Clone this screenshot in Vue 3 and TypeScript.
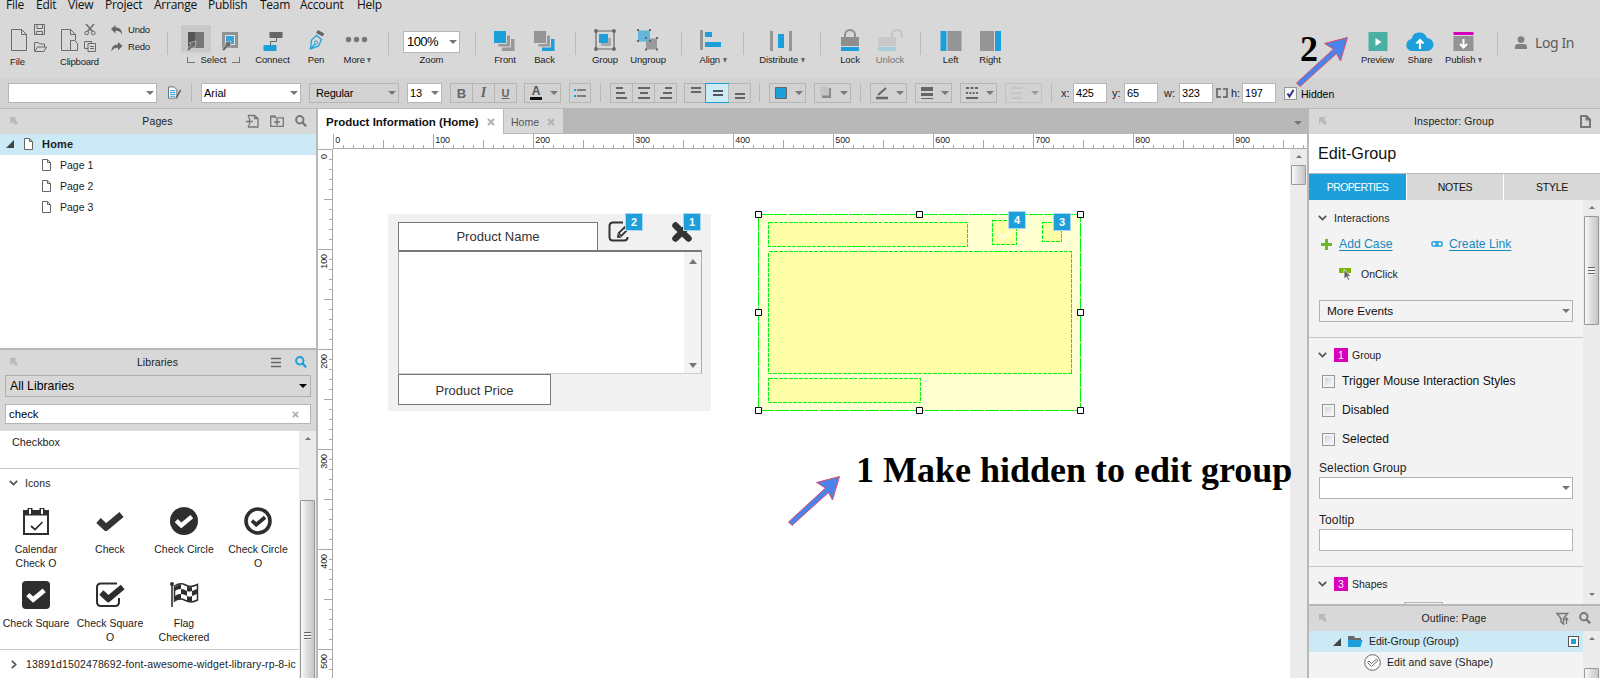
<script setup lang="ts">
interface Tick {
  at: number
  level: number
  label: string
}

const makeTicks = (count: number): Tick[] =>
  Array.from({ length: count }, (_, i) => ({
    at: i * 10,
    level: i % 10 === 0 ? 2 : i % 5 === 0 ? 1 : 0,
    label: i % 10 === 0 ? String(i * 10) : '',
  }))

const columns = makeTicks(98)
const rows = makeTicks(53)

const menu = [
  { name: 'File', w: 30 },
  { name: 'Edit', w: 32 },
  { name: 'View', w: 37 },
  { name: 'Project', w: 49 },
  { name: 'Arrange', w: 54 },
  { name: 'Publish', w: 52 },
  { name: 'Team', w: 40 },
  { name: 'Account', w: 57 },
  { name: 'Help', w: 40 },
]
const pages = ['Page 1', 'Page 2', 'Page 3']
const flags = ['Trigger Mouse Interaction Styles', 'Disabled', 'Selected']
const glyphs = [
  { id: 'cal', text: 'Calendar Check O' },
  { id: 'tick', text: 'Check' },
  { id: 'circle', text: 'Check Circle' },
  { id: 'circleo', text: 'Check Circle O' },
  { id: 'square', text: 'Check Square' },
  { id: 'squareo', text: 'Check Square O' },
  { id: 'flag', text: 'Flag Checkered' },
]
const handles = [
  [0, 0], [161, 0], [322, 0],
  [0, 98], [322, 98],
  [0, 196], [161, 196], [322, 196],
]
</script>

<template>
  <div class="app">
    <svg class="defs" width="0" height="0">
      <symbol id="popout" viewBox="0 0 8 8"><path d="M0 0h7L5 2l3 4-2 2-4-3-2 2z" fill="#bababa" /></symbol>
      <symbol id="page" viewBox="0 0 9 12"><path d="M.5 .5h5l3 3v8h-8zM5.5 .5v3h3" fill="#fff" stroke="#666" /></symbol>
      <symbol id="lens" viewBox="0 0 12 12"><circle cx="4.8" cy="4.8" r="3.7" fill="none" stroke="currentColor" stroke-width="2" /><path d="M7.5 7.5l3.7 3.8" stroke="currentColor" stroke-width="2.4" /></symbol>
      <symbol id="chev" viewBox="0 0 9 6"><path d="M.8 .8l3.7 3.8L8.200 .8" fill="none" stroke="#555" stroke-width="1.700" /></symbol>
      <symbol id="cross" viewBox="0 0 8 8"><path d="M1 1l6 6M7 1L1 7" stroke="#b4b4b4" stroke-width="2.200" /></symbol>
      <symbol id="mark" viewBox="0 0 28 20"><path d="M2.500 9.500l7.500 7L25.500 3.500" fill="none" stroke="currentColor" stroke-width="6.500" /></symbol>
    </svg>

    <nav class="menu">
      <span v-for="m in menu" :key="m.name" :style="{ width: m.w + 'px' }">{{ m.name }}</span>
    </nav>

    <header class="tools">
      <div class="tool file low">
        <svg viewBox="0 22 50 34" width="50" height="34">
          <g fill="none" stroke="#6a6a6a">
            <path d="M11.500 29.500h10l5 5v16h-15zM21.500 29.500v5h5" />
            <path d="M34.500 24.500h10v10h-10zM37 24.500v4h5.500v-4M36.500 34.500v-3h6v3" />
            <path d="M34.500 51v-8.500h4l1 1.500h5v3M34.500 51.500l3-4.500h9l-2.500 4.500z" />
          </g>
        </svg>
        <span>File</span>
      </div>
      <div class="tool clip low">
        <svg viewBox="50 22 58 34" width="58" height="34">
          <g fill="none" stroke="#6a6a6a">
            <path d="M70 50.500h-8.500v-21h9l5 5v6M70.500 29.500v5h5" />
            <path d="M70.500 40.500h4l3 3v7h-7z" />
            <path d="M88 51.500h7.500v-8h-7.500zM88 48.500h-3.500v-7h7v2M90 46.500h4M90 48.500h4" />
            <path d="M86 24l6.500 7.500M94 24l-6.500 7.500" stroke-width="1.500" />
            <circle cx="86.700" cy="33" r="1.800" /><circle cx="93.300" cy="33" r="1.800" />
          </g>
        </svg>
        <span>Clipboard</span>
      </div>
      <div class="history">
        <div><svg width="12" height="10" viewBox="0 0 12 10"><path d="M0 4L4.500 0v2.500C9 2.500 11 5 11 9.500 9 6.500 8 5.800 4.500 5.800V8.500z" fill="#666" /></svg>Undo</div>
        <div><svg width="12" height="10" viewBox="0 0 12 10"><path d="M11.500 4L7 0v2.500C2.500 2.500 .5 5 .5 9.500 2.500 6.500 3.500 5.800 7 5.800V8.500z" fill="#666" /></svg>Redo</div>
      </div>
      <i class="sep w18" />
      <div class="tool select">
        <svg viewBox="176 22 70 31" width="70" height="31">
          <path d="M181 25h30v27.500h-30z" fill="#c9c9c9" />
          <path d="M188 32h7v16h-7z" fill="#555" /><path d="M195 32h9v16h-9z" fill="#777" />
          <path d="M223.500 33.500h13v13h-13z" fill="#d8e8ef" stroke="#929292" stroke-width="3" />
          <path d="M226 36h8v8h-8z" fill="#35a3d8" />
          <g fill="#666" stroke="#ccc" stroke-width=".7">
            <path d="M196 41l-7 2 2 1.500-4 5 2 1.500 4-4.500 2 1.500z" />
            <path d="M231 41l-7 2 2 1.500-4 5 2 1.500 4-4.500 2 1.500z" />
          </g>
        </svg>
        <div class="bracket"><i class="l" /><span>Select</span><i class="r" /></div>
      </div>
      <div class="tool w53">
        <svg viewBox="-15 28 30 26"><path d="M-3.500 32h13v6h-13z" fill="#666" /><path d="M3.500 38v3.500h-6V45" fill="none" stroke="#666" /><path d="M-9.500 45h13v6h-13z" fill="#1c9fda" /></svg>
        <span>Connect</span>
      </div>
      <div class="tool w34">
        <svg viewBox="-15 28 30 26">
          <path d="M-5.500 49l1-9 5-4.500 5 4-3 6.500zM-5.500 49l4.500-5" fill="none" stroke="#2ba5dc" stroke-width="1.400" /><circle cx="0" cy="42.500" r="1.600" fill="none" stroke="#2ba5dc" />
          <path d="M1 31.500l6.500 3.500" stroke="#666" stroke-width="3.500" />
        </svg>
        <span>Pen</span>
      </div>
      <div class="tool w49">
        <svg viewBox="-15 28 30 26"><g fill="#777"><circle cx="-9.500" cy="39.500" r="2.700" /><circle cx="-1.500" cy="39.500" r="2.700" /><circle cx="6.500" cy="39.500" r="2.700" /></g></svg>
        <span>More <b class="tri" /></span>
      </div>
      <i class="sep w13" />
      <div class="tool zoom">
        <div class="zoombox">100%<b class="caret" /></div>
        <span>Zoom</span>
      </div>
      <i class="sep w15" />
      <div class="tool w44">
        <svg viewBox="-15 28 30 26"><path d="M-3 39h12.500v12h-12.500z" fill="#999" /><path d="M-7 35h12.500v12h-12.500z" fill="#999" stroke="#d8d8d8" /><path d="M-11.500 30.500h13v13h-13z" fill="#1c9fda" stroke="#d8d8d8" /></svg>
        <span>Front</span>
      </div>
      <div class="tool w35">
        <svg viewBox="-15 28 30 26"><path d="M-3 39h12.500v12h-12.500z" fill="#1c9fda" /><path d="M-7 35h12.500v12h-12.500z" fill="#999" stroke="#d8d8d8" /><path d="M-11.500 30.500h13v13h-13z" fill="#959595" stroke="#d8d8d8" /></svg>
        <span>Back</span>
      </div>
      <i class="sep w27" />
      <div class="tool w32">
        <svg viewBox="-15 28 30 26">
          <path d="M-4 38h10v8h-10z" fill="#aaa" /><path d="M-6 34h9v9h-9z" fill="#1c9fda" />
          <path d="M-9 31h18v18h-18z" fill="none" stroke="#666" stroke-width="1.200" />
          <g fill="#666"><circle cx="-9" cy="31" r="1.900" /><circle cx="9" cy="31" r="1.900" /><circle cx="-9" cy="49" r="1.900" /><circle cx="9" cy="49" r="1.900" /></g>
        </svg>
        <span>Group</span>
      </div>
      <div class="tool w54">
        <svg viewBox="-15 28 30 26">
          <path d="M-2 38.500h11v11h-11z" fill="#999" /><path d="M-10 30.500h12v11h-12z" fill="#64b4dc" />
          <g fill="#666"><path d="M-11 29h2v2h-2zM1 29h2v2h-2zM-11 40h2v2h-2zM1 40h2v2h-2zM-3 37h2v2h-2zM8 37h2v2h-2zM-3 48.500h2v2h-2zM8 48.500h2v2h-2z" /></g>
        </svg>
        <span>Ungroup</span>
      </div>
      <i class="sep w13" />
      <div class="tool w50">
        <svg viewBox="-15 28 30 26"><path d="M-13 30h3v20h-3z" fill="#959595" /><path d="M-8 32h7v5h-7zM-8 42h16v5h-16z" fill="#1c9fda" /></svg>
        <span>Align <b class="tri" /></span>
      </div>
      <i class="sep w11" />
      <div class="tool w66">
        <svg viewBox="-15 28 30 26"><path d="M-12 31h3v20h-3zM7 31h3v20H7z" fill="#959595" /><path d="M-4 34h6v14h-6z" fill="#1c9fda" /></svg>
        <span>Distribute <b class="tri" /></span>
      </div>
      <i class="sep w11" />
      <div class="tool w48">
        <svg viewBox="-15 28 30 26"><path d="M-5 38v-3a5 5 0 0 1 10 0v3" fill="none" stroke="#8e8e8e" stroke-width="2" /><path d="M-9 37H9v9H-9z" fill="#8e8e8e" /><path d="M-9 47H9v4H-9z" fill="#1c9fda" /></svg>
        <span>Lock</span>
      </div>
      <div class="tool w32 off">
        <svg viewBox="-15 28 30 26"><path d="M2 38v-3a5 5 0 0 1 10 0v2" fill="none" stroke="#c3c3c3" stroke-width="2" /><path d="M-12 37H6v9h-18z" fill="#c8c8c8" /><path d="M-12 47H6v4h-18z" fill="#a9ccdb" /></svg>
        <span>Unlock</span>
      </div>
      <i class="sep w29" />
      <div class="tool w31">
        <svg viewBox="-15 28 30 26"><path d="M-10.500 31h6v20h-6z" fill="#1c9fda" /><path d="M-3.500 31h14v20h-14z" fill="#959595" /></svg>
        <span>Left</span>
      </div>
      <div class="tool w48">
        <svg viewBox="-15 28 30 26"><path d="M5 31h6v20H5z" fill="#1c9fda" /><path d="M-10 31H4v20h-14z" fill="#959595" /></svg>
        <span>Right</span>
      </div>
      <div class="gap" />
      <div class="tool w45">
        <svg viewBox="-15 28 30 26"><path d="M-9.500 32h19v19h-19z" fill="#4ab0a4" /><path d="M-2.500 38v8l6-4z" fill="#fff" /></svg>
        <span>Preview</span>
      </div>
      <div class="tool w40">
        <svg viewBox="-15 28 30 26"><path d="M-7 51a6 6 0 0 1-1.500-12A8 8 0 0 1 7 38a6.500 6.500 0 0 1 0 13z" fill="#1c9fda" /><path d="M0 49v-8M-3.500 43.500L0 40l3.500 3.500" fill="none" stroke="#fff" stroke-width="2.200" /></svg>
        <span>Share</span>
      </div>
      <div class="tool w47">
        <svg viewBox="-15 28 30 26"><path d="M-10.500 32h20v3h-20z" fill="#d900bd" /><path d="M-10.500 36h20v15h-20z" fill="#939393" /><path d="M-.5 39v8M-4 44l3.500 3.500L3 44" fill="none" stroke="#fff" stroke-width="2" /></svg>
        <span>Publish <b class="tri" /></span>
      </div>
      <i class="sep w21" />
      <div class="login">
        <svg width="12" height="13" viewBox="0 0 12 13"><circle cx="6" cy="3.600" r="3.400" fill="#808080" /><path d="M0 13v-2q0-3 3-3h6q3 0 3 3v2z" fill="#808080" /></svg>
        Log In
      </div>
    </header>

    <section class="format">
      <div class="box white b149"><b class="caret" /></div>
      <svg class="ico-style" width="15" height="14" viewBox="0 0 15 14"><path d="M.5 .5h6l3 3v9h-9z" fill="#fff" stroke="#666" /><path d="M2 4.500h6M2 6.500h6M2 8.500h6M2 10.500h6" stroke="#1c9fda" /><path d="M13.500 4l-4.500 8" stroke="#666" stroke-width="1.800" /></svg>
      <i class="bar" />
      <div class="box white b100"><span>Arial</span><b class="caret" /></div>
      <div class="box b90"><span class="in">Regular</span><b class="caret" /></div>
      <div class="box white b35"><span>13</span><b class="caret" /></div>
      <div class="seg">
        <i class="bold">B</i><i class="ital">I</i><i class="und">U</i>
      </div>
      <div class="box b37"><i class="colr">A</i><b class="caret" /></div>
      <div class="box b22"><svg width="22" height="18" viewBox="0 0 22 18"><path d="M4 5h2v2H4zM4 11h2v2H4z" fill="#1c9fda" /><path d="M7 6h9M7 12h9" stroke="#666" stroke-width="1.500" /></svg></div>
      <i class="bar m9" />
      <div class="seg">
        <i><svg width="20" height="18" viewBox="0 0 20 18"><path d="M4 4h7M4 9h9M4 14h11" stroke="#666" stroke-width="2" /></svg></i>
        <i><svg width="20" height="18" viewBox="0 0 20 18"><path d="M4 4h12M6 9h8M4 14h12" stroke="#666" stroke-width="2" /></svg></i>
        <i><svg width="20" height="18" viewBox="0 0 20 18"><path d="M9 4h7M7 9h9M4 14h12" stroke="#666" stroke-width="2" /></svg></i>
      </div>
      <div class="seg">
        <i><svg width="20" height="18" viewBox="0 0 20 18"><path d="M5 4h10M5 8h10" stroke="#666" stroke-width="2" /></svg></i>
        <i class="on"><svg width="20" height="18" viewBox="0 0 20 18"><path d="M5 7h10M5 11h10" stroke="#555" stroke-width="2" /></svg></i>
        <i><svg width="20" height="18" viewBox="0 0 20 18"><path d="M5 10h10M5 14h10" stroke="#666" stroke-width="2" /></svg></i>
      </div>
      <i class="bar m9" />
      <div class="box b37"><svg width="20" height="18" viewBox="0 0 20 18"><path d="M5.500 3.500h11v11h-11z" fill="#1c9fda" stroke="#666" /></svg><b class="caret" /></div>
      <div class="box b37"><svg width="20" height="18" viewBox="0 0 20 18"><path d="M7 4h9v10H7z" fill="#8a8a8a" /><path d="M5 2.500h9v9H5z" fill="#c4c4c4" /></svg><b class="caret" /></div>
      <i class="bar m9" />
      <div class="box b37"><svg width="20" height="18" viewBox="0 0 20 18"><path d="M5 14h12" stroke="#666" stroke-width="2.500" /><path d="M7 11l8-7" stroke="#666" stroke-width="2" /></svg><b class="caret" /></div>
      <div class="box b37"><svg width="20" height="18" viewBox="0 0 20 18"><path d="M5 3h12v4H5zM5 9h12v3H5zM5 14h12v1H5z" fill="#666" /></svg><b class="caret" /></div>
      <div class="box b37"><svg width="20" height="18" viewBox="0 0 20 18"><path d="M5 4h12" stroke="#666" stroke-width="2" stroke-dasharray="3 1.500" /><path d="M5 9h12" stroke="#666" stroke-width="2" stroke-dasharray="2 1.300" /><path d="M5 14h12" stroke="#666" stroke-width="2" /></svg><b class="caret" /></div>
      <div class="box b37 dim"><svg width="20" height="18" viewBox="0 0 20 18"><path d="M5 4h11M5 9h11M5 14h11" stroke="#aaa" /></svg><b class="caret" /></div>
      <i class="bar m9" />
      <label class="dim-l">x:</label><div class="box white b34 n">425</div>
      <label class="dim-l two">y:</label><div class="box white b34 n">65</div>
      <label class="dim-l three">w:</label><div class="box white b34 n">323</div>
      <svg class="ico-link" width="12" height="10" viewBox="0 0 12 10"><path d="M5 1H1v8h4M7 1h4v8H7" fill="none" stroke="#777" stroke-width="2" /></svg>
      <label class="dim-l four">h:</label><div class="box white b34 n">197</div>
      <div class="chk hid"><svg width="11" height="11" viewBox="0 0 11 11"><path d="M2.500 5.500l2 3L8.500 2" fill="none" stroke="#2d2f86" stroke-width="2" /></svg></div>
      <span class="hidden-t">Hidden</span>
    </section>

    <main class="body">
      <aside class="left">
        <div class="head">
          <svg class="pop" width="8" height="8"><use href="#popout" /></svg>
          <span class="ttl">Pages</span>
          <span class="acts">
            <svg width="13" height="14" viewBox="0 0 13 14"><path d="M2.500 4V1.500h6l3.500 3V13H2.500v-2M8.500 1.500v3h3.500M0 7.500h7M3.500 4v7" fill="none" stroke="#777" stroke-width="1.300" /></svg>
            <svg width="14" height="12" viewBox="0 0 14 12"><path d="M.7 11.300v-10h4l1 1.500h7.600v8.500z" fill="none" stroke="#777" stroke-width="1.300" /><path d="M.5 .5h5v2h-5z" fill="#777" /><path d="M7 4v6M4 7h6" stroke="#777" stroke-width="1.600" /></svg>
            <svg class="grey" width="12" height="12"><use href="#lens" /></svg>
          </span>
        </div>
        <div class="tree">
          <div class="row on"><svg class="exp" width="8" height="8" viewBox="0 0 8 8"><path d="M8 0v8H0z" fill="#444" /></svg><svg width="9" height="12"><use href="#page" /></svg><b>Home</b></div>
          <div v-for="p in pages" :key="p" class="row sub"><svg width="9" height="12"><use href="#page" /></svg><span>{{ p }}</span></div>
        </div>
        <div class="libs">
          <div class="head">
            <svg class="pop" width="8" height="8"><use href="#popout" /></svg>
            <span class="ttl">Libraries</span>
            <span class="acts">
              <svg width="10" height="11" viewBox="0 0 10 11"><path d="M0 1.500h10M0 5.500h10M0 9.500h10" stroke="#666" stroke-width="1.600" /></svg>
              <svg class="blue" width="12" height="12"><use href="#lens" /></svg>
            </span>
          </div>
          <div class="libsel">All Libraries<b class="caret k" /></div>
          <div class="libq">check<svg width="7" height="7"><use href="#cross" /></svg></div>
          <div class="lib-body">
            <div class="lib-list">
              <div class="cb">Checkbox</div>
              <div class="cat"><svg width="9" height="6"><use href="#chev" /></svg>Icons</div>
              <div class="grid">
                <div v-for="g in glyphs" :key="g.id" class="cell">
                  <svg width="30" height="30" viewBox="-15 -15 30 30">
                    <g v-if="g.id === 'cal'" fill="none" stroke="#2e2e2e"><path d="M-12-10h24v23h-24z" stroke-width="2" /><path d="M-12-8h24" stroke-width="5" /><path d="M-6-13v6M6-13v6" stroke-width="5" /><path d="M-6-12v5M6-12v5" stroke="#fff" stroke-width="2" /><path d="M-5 5l4 3.500L6.500 1" stroke-width="1.700" /></g>
                    <use v-else-if="g.id === 'tick'" href="#mark" x="-14" y="-10" width="28" height="20" color="#333" />
                    <g v-else-if="g.id === 'circle'"><circle r="14" fill="#2e2e2e" /><use href="#mark" x="-9.500" y="-7" width="19" height="14" color="#fff" /></g>
                    <g v-else-if="g.id === 'circleo'"><circle r="12" fill="none" stroke="#2e2e2e" stroke-width="3.600" /><use href="#mark" x="-7.500" y="-6" width="16" height="12" color="#2e2e2e" /></g>
                    <g v-else-if="g.id === 'square'"><rect x="-14" y="-14" width="28" height="28" rx="4" fill="#2e2e2e" /><use href="#mark" x="-10" y="-8" width="20" height="16" color="#fff" /></g>
                    <g v-else-if="g.id === 'squareo'"><path d="M7-11.500H-9q-4 0-4 4V7q0 4 4 4H5q4 0 4-4V3" fill="none" stroke="#2e2e2e" stroke-width="2" /><use href="#mark" x="-11" y="-11.500" width="26" height="19" color="#2e2e2e" /></g>
                    <g v-else>
                      <path d="M-12-12v24" stroke="#2e2e2e" stroke-width="1.600" /><circle cx="-12" cy="-11" r="2" fill="#2e2e2e" />
                      <path d="M-9.500-9q6-4 11-1t12-.5V5q-6 3.500-12 .5T-9.500 6z" fill="#fff" stroke="#2e2e2e" stroke-width="1.500" />
                      <path d="M-9-8q3-3 6-2.500V-6q-3-.5-6 2zM3-9q3 2 5 1v4q-3 1-5 0zM-3-6q3 0 6 2V1q-3-2-6-2zM8-4l5-2v5L8 1zM-9 1q3-2.500 6-2v5q-3-.5-6 1.500zM3 1q3 1.500 5 0v5q-3 1-5 0z" fill="#2e2e2e" />
                    </g>
                  </svg>
                  <span>{{ g.text }}</span>
                </div>
              </div>
              <div class="cat last"><svg width="6" height="9" viewBox="0 0 6 9"><path d="M.8 .8l3.900 3.700L.8 8.200" fill="none" stroke="#555" stroke-width="1.700" /></svg>13891d1502478692-font-awesome-widget-library-rp-8-ic</div>
            </div>
            <div class="sb sbl"><i class="up" /><div class="thumb"><i class="grip" /></div></div>
          </div>
        </div>
      </aside>

      <section class="center">
        <div class="tabs">
          <div class="tab on">Product Information (Home)<svg width="8" height="8"><use href="#cross" /></svg></div>
          <div class="tab">Home<svg width="8" height="8"><use href="#cross" /></svg></div>
          <b class="caret" />
        </div>
        <svg class="hr" width="989" height="15" viewBox="318 134 989 15">
          <path d="M333 148.500H1307" stroke="#aaa" />
          <g v-for="t in columns" :key="t.at">
            <path :d="`M${333.5 + t.at} ${[145, 140, 134][t.level]}V149`" stroke="#a8a8a8" />
            <text v-if="t.label" :x="335.300 + t.at" y="143">{{ t.label }}</text>
          </g>
        </svg>
        <div class="work">
          <svg class="vr" width="15" height="529" viewBox="318 149 15 529">
            <path d="M332.500 149V678" stroke="#aaa" />
            <g v-for="t in rows" :key="t.at">
              <path :d="`M${[329, 324, 318][t.level]} ${149.5 + t.at}H333`" stroke="#a8a8a8" />
              <text v-if="t.label" text-anchor="end" :transform="`translate(327 ${154 + t.at}) rotate(-90)`">{{ t.label }}</text>
            </g>
          </svg>
          <div class="canvas">
            <div class="shape card" />
            <div class="shape name">Product Name</div>
            <div class="shape area"><div><i class="up" /><i class="down" /></div></div>
            <div class="shape price">Product Price</div>
            <svg class="shape ic-edit" width="22" height="22" viewBox="0 0 22 22"><path d="M15 1.500H5Q1.500 1.500 1.500 5v11Q1.500 19.500 5 19.500h11q3.500 0 3.500-3.500" fill="none" stroke="#333" stroke-width="2" /><path d="M18.500 7l-7 7" stroke="#333" stroke-width="5.500" /><path d="M17 8.500l-4.500 4.500" stroke="#f1f1f1" stroke-width="1.800" /><path d="M9 17l.5-4.500 4 4z" fill="#333" /></svg>
            <svg class="shape ic-x" width="20" height="20" viewBox="0 0 20 20"><path d="M3.500 3.500l13 13M16.500 3.500l-13 13" stroke="#333" stroke-width="6.500" stroke-linecap="round" /></svg>
            <i class="shape note n2">2</i><i class="shape note n1">1</i>

            <svg class="shape group" width="330" height="204" viewBox="-4 -4 330 204">
              <path d="M.5 .5h322v196H.5z" fill="#ffffd1" stroke="#00f510" stroke-dasharray="14 1" shape-rendering="crispEdges" />
              <g fill="#ffffa8" stroke="#00f510" stroke-dasharray="4 1" shape-rendering="crispEdges">
                <path d="M10.500 8.500h199v24h-199zM10.500 37.500h303v122h-303zM10.500 164.500h152v24h-152zM234.500 6.500h24v24h-24zM284.500 8.500h19v19h-19z" />
              </g>
              <path d="M239.500 19l5.500 5.500 8-8" fill="none" stroke="#ffffd8" stroke-width="3" />
              <path v-for="h in handles" :key="h.join()" :d="`M${h[0] - 2.5} ${h[1] - 2.5}h6v6h-6z`" fill="#fff" stroke="#000" />
            </svg>
            <i class="shape note n4">4</i><i class="shape note n3">3</i>
          </div>
          <div class="sb sbc"><i class="up" /><div class="thumb" /></div>
        </div>
      </section>

      <aside class="right">
        <div class="head">
          <svg class="pop" width="8" height="8"><use href="#popout" /></svg>
          <span class="ttl">Inspector: Group</span>
          <span class="acts"><svg width="11" height="13" viewBox="0 0 11 13"><path d="M1 1h5.500L10 4.500V12H1zM6.500 1v3.500H10" fill="none" stroke="#777" stroke-width="2" /></svg></span>
        </div>
        <div class="gname">Edit-Group</div>
        <div class="ptabs"><span class="on">PROPERTIES</span><span>NOTES</span><span>STYLE</span></div>
        <div class="props">
          <div class="plist">
            <div class="ph p1"><svg width="9" height="6"><use href="#chev" /></svg><span>Interactions</span></div>
            <div class="links">
              <svg width="11" height="11" viewBox="0 0 11 11"><path d="M0 5.500h11M5.500 0v11" stroke="#6db82a" stroke-width="3" /></svg><a class="a1">Add Case</a>
              <svg width="12" height="6" viewBox="0 0 12 6"><rect x=".8" y=".8" width="6.200" height="4.200" rx="2.100" fill="none" stroke="#2ba5dc" stroke-width="1.500" /><rect x="5" y=".8" width="6.200" height="4.200" rx="2.100" fill="none" stroke="#2ba5dc" stroke-width="1.500" /></svg><a>Create Link</a>
            </div>
            <div class="click"><svg width="13" height="13" viewBox="0 0 13 13"><path d="M0 0h12v5H0z" fill="#76b900" /><path d="M5 1.500l7 6.500-3 .3 1.600 3.400-1.600.8-1.500-3.500L5 11z" fill="#666" stroke="#f3f3f3" stroke-width=".8" /></svg>OnClick</div>
            <div class="field ev">More Events<b class="caret" /></div>
            <div class="ph p2"><svg width="9" height="6"><use href="#chev" /></svg><em>1</em><span>Group</span></div>
            <div v-for="f in flags" :key="f" class="flag"><i class="chk" />{{ f }}</div>
            <div class="lbl">Selection Group</div>
            <div class="field w"><b class="caret" /></div>
            <div class="lbl t">Tooltip</div>
            <div class="field w" />
            <div class="ph p3"><svg width="9" height="6"><use href="#chev" /></svg><em>3</em><span>Shapes</span></div>
            <div class="peek" />
          </div>
          <div class="sb sbr"><i class="up" /><div class="thumb"><i class="grip" /></div><i class="down" /></div>
        </div>
        <div class="outline">
          <div class="head">
            <svg class="pop" width="8" height="8"><use href="#popout" /></svg>
            <span class="ttl">Outline: Page</span>
            <span class="acts">
              <svg width="13" height="13" viewBox="0 0 13 13"><path d="M1 1.500h10.500L7.500 6.500V12L5 10V6.500z" fill="none" stroke="#777" stroke-width="1.500" /><path d="M10.500 12V6M8.800 8l1.700-2 1.700 2" fill="none" stroke="#777" stroke-width="1.200" /></svg>
              <svg class="grey" width="12" height="12"><use href="#lens" /></svg>
            </span>
          </div>
          <div class="obody">
            <div class="olist">
              <div class="orow on"><svg class="exp" width="8" height="8" viewBox="0 0 8 8"><path d="M8 0v8H0z" fill="#444" /></svg><svg width="15" height="11" viewBox="0 0 15 11"><path d="M0 0h6l1 2h6v3H0z" fill="#666" /><path d="M0 11V3l2.500 1H14.500L12.500 11z" fill="#1c9fda" /></svg><span>Edit-Group (Group)</span><i class="vis" /></div>
              <div class="orow two"><svg width="17" height="17" viewBox="0 0 17 17"><circle cx="8.500" cy="8.500" r="7.800" fill="#fff" stroke="#666" /><path d="M3.500 8.500l1.500-1.500 2.500 2.500 5-4.500 1.500 1.500-6.500 6z" fill="none" stroke="#666" /></svg><span>Edit and save (Shape)</span></div>
            </div>
            <div class="sb sbo"><i class="up" /><div class="thumb" /></div>
          </div>
        </div>
      </aside>
    </main>

    <svg class="arrow first" width="54" height="52" viewBox="-2 -1 54 52"><path d="M50.500 .5L43.500 24l-4-7.500L3 49.500 -.5 46 36.500 12 27.500 6.500z" fill="#4b83ea" stroke="#e04e66" /></svg>
    <svg class="arrow second" width="54" height="52" viewBox="-2 -1 54 52"><path d="M50.500 .5L43.500 24l-4-7.500L3 49.500 -.5 46 36.500 12 27.500 6.500z" fill="#4b83ea" stroke="#e04e66" /></svg>
    <div class="hint one">1 Make hidden to edit group</div>
    <div class="hint dos">2</div>
  </div>
</template>

<style>
body { margin: 0; overflow: hidden; }
</style>

<style scoped>
* { box-sizing: border-box; }
.app { position: relative; width: 1600px; height: 678px; overflow: hidden; display: flex; flex-direction: column; background: #d8d8d8; font-family: "Liberation Sans", Arial, sans-serif; font-size: 10.5px; color: #1c1c1c; }
.defs { position: absolute; }
svg { flex: none; display: block; }
i { font-style: normal; }
.menu { height: 14px; flex: none; display: flex; align-items: flex-start; padding-left: 6px; font: 12px/9px "Open Sans", "Noto Sans", sans-serif; letter-spacing: -.25px; color: #111; }
.menu span { white-space: nowrap; flex: none; }

.tools { height: 64px; flex: none; display: flex; font-size: 9.500px; letter-spacing: -.1px; }
.tool { flex: none; padding-top: 14px; display: flex; flex-direction: column; align-items: center; line-height: 12px; white-space: nowrap; }
.tool > svg { width: 30px; height: 26px; }
.tool.low { padding-top: 8px; align-items: flex-start; }
.tool.low > svg { height: 34px; }
.file { width: 50px; } .file > svg { width: 50px; } .file span { margin-left: 10px; }
.clip { width: 58px; } .clip > svg { width: 58px; } .clip span { margin-left: 10px; letter-spacing: -.2px; }
.history { width: 50px; flex: none; padding: 7px 0 0 3px; }
.history div { height: 17px; display: flex; align-items: center; gap: 5px; letter-spacing: -.2px; }
.tool.select { width: 70px; padding-top: 8px; }
.tool.select > svg { width: 70px; height: 31px; }
.bracket { display: flex; align-items: center; gap: 6px; margin-top: 1px; padding-left: 5px; }
.bracket i { width: 8px; height: 6px; border-bottom: 1px solid #777; }
.bracket .l { border-left: 1px solid #777; } .bracket .r { border-right: 1px solid #777; }
.off { color: #777; }
.w11 { width: 11px; } .w13 { width: 13px; } .w15 { width: 15px; } .w18 { width: 18px; } .w21 { width: 21px; } .w27 { width: 27px; } .w29 { width: 29px; }
.w31 { width: 31px; } .w32 { width: 32px; } .w34 { width: 34px; } .w35 { width: 35px; } .w40 { width: 40px; } .w44 { width: 44px; } .w45 { width: 45px; }
.w47 { width: 47px; } .w48 { width: 48px; } .w49 { width: 49px; } .w50 { width: 50px; } .w53 { width: 53px; } .w54 { width: 54px; } .w66 { width: 66px; }
.sep { flex: none; display: flex; justify-content: center; padding-top: 18px; }
.sep::before { content: ""; width: 1px; height: 23px; background: #bcbcbc; }
.tri { display: inline-block; border: 2.500px solid transparent; border-top: 5px solid #666; border-bottom: 0; vertical-align: 0; }
.caret { display: block; flex: none; border: 4px solid transparent; border-top: 4.500px solid #777; border-bottom: 0; margin-left: auto; }
.caret.k { border-top-color: #000; }
.zoom { width: 73px; padding-top: 17px; }
.zoombox { width: 57px; height: 22px; margin: 0 0 1px; border: 1px solid #b6b6b6; background: #fff; font-size: 13px; letter-spacing: -.6px; padding: 0 2px 0 3px; display: flex; align-items: center; color: #000; }
.gap { flex: none; width: 341px; }
.login { display: flex; align-items: center; gap: 8px; height: 26px; margin: 15px 0 0 7px; font: 14px "Noto Sans", sans-serif; color: #5c5c5c; letter-spacing: -.4px; white-space: nowrap; }

.format { height: 30px; flex: none; display: flex; align-items: flex-start; padding: 5px 0 0 8px; background: #d2d2d2; font-size: 11px; color: #000; }
.box { height: 20px; flex: none; margin-right: 8px; border: 1px solid #b6b6b6; display: flex; align-items: center; padding: 0 2px; }
.box.white { background: #fff; }
.b149 { width: 149px; margin-right: 11px; } .b100 { width: 100px; } .b90 { width: 90px; } .b35 { width: 35px; } .b37 { width: 37px; padding-left: 0; } .b22 { width: 22px; padding: 0; margin-right: 0; } .b34 { width: 34px; }
.in { margin-left: 4px; letter-spacing: -.2px; }
.ico-style { margin: 3px 9px 0 0; width: 14px; }
.bar { width: 1px; height: 18px; margin: 1px 9px 0 0; background: #b8b8b8; flex: none; }
.bar.m9 { margin-left: 1px; }
.b22 + .bar.m9 { margin-left: 9px; }
.seg { display: flex; flex: none; height: 20px; width: 67px; border: 1px solid #b6b6b6; margin-right: 7px; }
.seg i { flex: 1; display: flex; justify-content: center; align-items: center; font-size: 13px; color: #666; }
.seg i + i { border-left: 1px solid #b6b6b6; }
.seg .on { background: #cdeaf7; outline: 1px solid #1c9fda; border-color: #cdeaf7; }
.seg .bold { font-weight: bold; } .seg .ital { font: italic bold 14px "Liberation Serif", serif; } .seg .und { font-weight: bold; font-size: 11px; text-decoration: underline; }
.colr { margin-left: 5px; width: 12px; height: 14px; line-height: 11px; font-weight: bold; font-size: 12px; text-align: center; border-bottom: 3px solid #111; color: #555; }
.dim { opacity: .6; }
.dim-l { width: 12px; flex: none; line-height: 20px; color: #222; }
.dim-l.two { margin-left: -3px; } .dim-l.three { margin-left: -2px; width: 15px; } .dim-l.four { width: 11px; }
.b34.n { letter-spacing: -.2px; }
.ico-link { margin: 5px 3px 0 -5px; }
.chk { width: 13px; height: 13px; flex: none; border: 1px solid #999; background: linear-gradient(135deg, #c8ccd0, #fff); box-shadow: inset 0 0 0 2px #f3f3f3; display: block; }
.chk.hid { margin: 4px 4px 0 0; background: #fff; }
.hidden-t { line-height: 22px; font-size: 10.500px; }

.body { flex: 1; min-height: 0; display: flex; border-top: 1px solid #b8b8b8; }
.left { width: 318px; flex: none; border-right: 2px solid #b8b8b8; display: flex; flex-direction: column; background: #fff; }
.head { height: 25px; flex: none; display: grid; grid-template-columns: 1fr auto 1fr; align-items: center; background: #d8d8d8; padding: 0 9px 2px 10px; letter-spacing: .1px; }
.left .head { padding-right: 9px; }
.ttl { margin-left: -2px; }
.acts { display: flex; gap: 11px; justify-content: flex-end; align-items: center; padding-top: 1px; }
.grey { color: #777; } .blue { color: #1c9fda; }
.tree { height: 214px; flex: none; }
.row { height: 21px; display: flex; align-items: center; gap: 9px; padding-bottom: 1px; }
.row b, .row span { margin-top: -1px; }
.row.on { background: #cbeaf6; padding-left: 6px; font-size: 11px; letter-spacing: .2px; }
.row.on .exp { margin-right: 1px; }
.row.sub { padding-left: 42px; }
.libs { flex: 1; min-height: 0; border-top: 2px solid #b8b8b8; background: #d8d8d8; display: flex; flex-direction: column; }
.libs .acts { gap: 14px; }
.libsel { height: 22px; flex: none; margin: 0 5px 7px; border: 1px solid #b0b0b0; font-size: 12.300px; display: flex; align-items: center; padding: 0 3px 0 4px; color: #000; }
.libq { height: 20px; flex: none; margin: 0 5px 7px; border: 1px solid #b6b6b6; background: #fff; font-size: 11.300px; display: flex; align-items: center; justify-content: space-between; padding: 0 11px 0 3px; color: #000; }
.lib-body { flex: 1; min-height: 0; display: flex; background: #fff; }
.lib-list { width: 299px; overflow: hidden; }
.cb { height: 38px; padding-left: 12px; line-height: 22px; border-bottom: 1px solid #c8c8c8; font-size: 10.800px; }
.cat { display: flex; align-items: center; gap: 11px; padding: 0 0 2px 9px; height: 30px; white-space: nowrap; }
.cat:not(.last) { gap: 7px; padding-left: 9px; letter-spacing: .1px; }
.grid { display: grid; grid-template-columns: repeat(4, 74px); grid-auto-rows: 74px; padding-top: 7px; height: 151px; margin-left: -1px; border-bottom: 1px solid #c8c8c8; }
.cell { display: flex; flex-direction: column; align-items: center; text-align: center; line-height: 14px; gap: 6px; }
.cell span { max-width: 69px; }
.cell:nth-child(4) span { max-width: 64px; }
.cat.last { gap: 9px; padding-left: 11px; padding-bottom: 2px; letter-spacing: .15px; }
.sb { background: #ebebeb; flex: none; display: flex; flex-direction: column; align-items: center; }
.up, .down { display: block; flex: none; border: 3px solid transparent; width: 0; height: 0; }
.up { border-bottom: 3.500px solid #777; border-top: 0; }
.down { border-top: 3.500px solid #777; border-bottom: 0; }
.thumb { flex: none; border: 1px solid #999; background: linear-gradient(90deg, #f4f4f4 10%, #dcdcdf 50%, #c6c6ca); border-radius: 1px; display: flex; align-items: center; justify-content: center; }
.grip { width: 7px; height: 8px; background: repeating-linear-gradient(#666 0 1px, #f0f0f0 1px 3px); }
.sbl { width: 17px; padding-top: 6px; }
.sbl .thumb { margin-top: 60px; width: 15px; height: 271px; }

.center { width: 989px; flex: none; background: #fff; display: flex; flex-direction: column; }
.tabs { height: 25px; flex: none; background: #b8b8b8; display: flex; align-items: flex-start; }
.tab { height: 24px; width: 60px; background: #d8d8d8; border-left: 1px solid #b8b8b8; padding-left: 7px; display: flex; align-items: center; gap: 8px; color: #555; white-space: nowrap; padding-top: 1px; }
.tab.on { width: 185px; height: 25px; background: #fff; font-weight: bold; font-size: 11.500px; color: #111; border: 0; padding-left: 8px; }
.tabs > .caret { margin: 12px 5px 0 auto; }
.hr text, .vr text { font-size: 9px; fill: #222; letter-spacing: -.1px; }
.work { flex: 1; min-height: 0; display: flex; }
.canvas { position: relative; width: 957px; flex: none; }
.sbc { width: 17px; padding-top: 6px; }
.sbc .thumb { width: 15px; height: 20px; margin-top: 7px; }
.shape { position: absolute; }
.card { left: 55px; top: 65px; width: 323px; height: 197px; background: #f1f1f1; }
.name, .price { display: flex; align-items: center; justify-content: center; border: 1px solid #777; background: #fff; font-size: 13px; color: #333; }
.name { left: 65px; top: 73px; width: 200px; height: 29px; }
.price { left: 65px; top: 225px; width: 153px; height: 31px; padding-top: 2px; }
.area { left: 65px; top: 101px; width: 304px; height: 124px; background: #fff; border: 1px solid #aaa; border-top: 2px solid #777; border-bottom-color: #d0d0d0; }
.area div { margin-left: auto; width: 17px; height: 100%; background: #f3f3f3; display: flex; flex-direction: column; justify-content: space-between; align-items: center; padding: 7px 0 5px; }
.area .up { border-width: 0 4px 5px; } .area .down { border-width: 5px 4px 0; }
.ic-edit { left: 275px; top: 72px; }
.ic-x { left: 339px; top: 73px; }
.note { width: 18px; height: 18px; border: 1px solid #a9d9f0; background: #1c9fda; color: #fff; font-weight: bold; font-size: 11px; line-height: 16px; text-align: center; }
.n2 { left: 292px; top: 64px; } .n1 { left: 350px; top: 64px; } .n4 { left: 675px; top: 62px; } .n3 { left: 720px; top: 64px; }
.group { left: 421px; top: 61px; }

.right { flex: 1; border-left: 2px solid #b8b8b8; display: flex; flex-direction: column; background: #f3f3f3; }
.gname { height: 40px; flex: none; background: #fff; border-bottom: 1px solid #b8b8b8; font-size: 16.200px; line-height: 39px; padding-left: 9px; color: #111; }
.ptabs { height: 26px; flex: none; display: grid; grid-template-columns: 97px 96px 96px; gap: 1px; background: #fff; }
.ptabs span { background: #d8d8d8; text-align: center; line-height: 26px; letter-spacing: -.3px; color: #111; }
.ptabs .on { background: #1c9fda; color: #fff; letter-spacing: -.6px; }
.props { height: 404px; flex: none; display: flex; }
.plist { width: 274px; overflow: hidden; }
.sbr { width: 17px; padding-top: 6px; }
.sbr .thumb { width: 15px; height: 109px; margin-top: 7px; }
.sbr .down { margin-top: auto; margin-bottom: 8px; }
.sbr .up, .sbr .down { border-left-width: 3.500px; border-right-width: 3.500px; }
.ph { display: flex; align-items: center; padding-left: 9px; height: 36px; }
.ph svg { margin-right: 7px; }
.ph em { width: 14px; height: 14px; background: #d900bd; color: #fff; font-style: normal; text-align: center; line-height: 14px; margin-right: 4px; }
.p1 { letter-spacing: .1px; }
.links { display: flex; align-items: center; height: 16px; padding-left: 12px; font-size: 12.200px; }
.links svg { margin-right: 7px; } .links svg:nth-of-type(2) { margin-right: 6px; }
.links a { color: #1489bd; text-decoration: underline; text-underline-offset: 2px; }
.a1 { width: 92px; }
.click { display: flex; align-items: center; gap: 9px; height: 20px; margin-top: 12px; padding-left: 30px; }
.field { width: 254px; margin-left: 10px; height: 22px; border: 1px solid #b2b2b2; background: #fff; display: flex; align-items: center; padding: 0 2px 0 7px; font-size: 11.800px; color: #111; }
.ev { margin-top: 16px; margin-bottom: 15px; background: #f3f3f3; }
.p2, .p3 { border-top: 1px solid #c8c8c8; padding-bottom: 2px; }
.flag { height: 29px; display: flex; align-items: center; gap: 7px; padding: 0 0 13px 13px; font-size: 12.100px; color: #111; }
.lbl { height: 16px; line-height: 16px; padding-left: 10px; font-size: 12px; margin-bottom: 1px; letter-spacing: .1px; }
.lbl.t { margin-top: 13px; }
.p3 { margin-top: 15px; }
.peek { margin: 0 0 0 95px; width: 39px; height: 10px; border: 1px solid #b2b2b2; }
.outline { flex: 1; min-height: 0; border-top: 2px solid #b8b8b8; display: flex; flex-direction: column; }
.outline .acts { gap: 10px; }
.outline .head { padding-right: 9px; }
.obody { flex: 1; min-height: 0; display: flex; }
.olist { width: 274px; }
.orow { height: 21px; display: flex; align-items: center; padding-left: 24px; gap: 7px; }
.orow span { margin-top: -2px; }
.orow.on { background: #cbeaf6; }
.orow.on span { margin-left: -1px; }
.orow.two { padding-left: 55px; gap: 6px; letter-spacing: .1px; }
.vis { margin-left: auto; margin-right: 4px; width: 11px; height: 11px; border: 1px solid #555; background: #1c9fda; box-shadow: inset 0 0 0 2px #fff; }
.sbo { width: 17px; padding-top: 6px; overflow: hidden; }
.sbo .thumb { width: 15px; height: 30px; margin-top: 28px; }

.arrow { position: absolute; }
.first { left: 787px; top: 475px; }
.second { left: 1295px; top: 36px; }
.hint { position: absolute; font: bold 36px/40px "Liberation Serif", "Times New Roman", serif; color: #000; white-space: nowrap; }
.one { left: 856px; top: 450px; }
.dos { left: 1300px; top: 29px; }
</style>
